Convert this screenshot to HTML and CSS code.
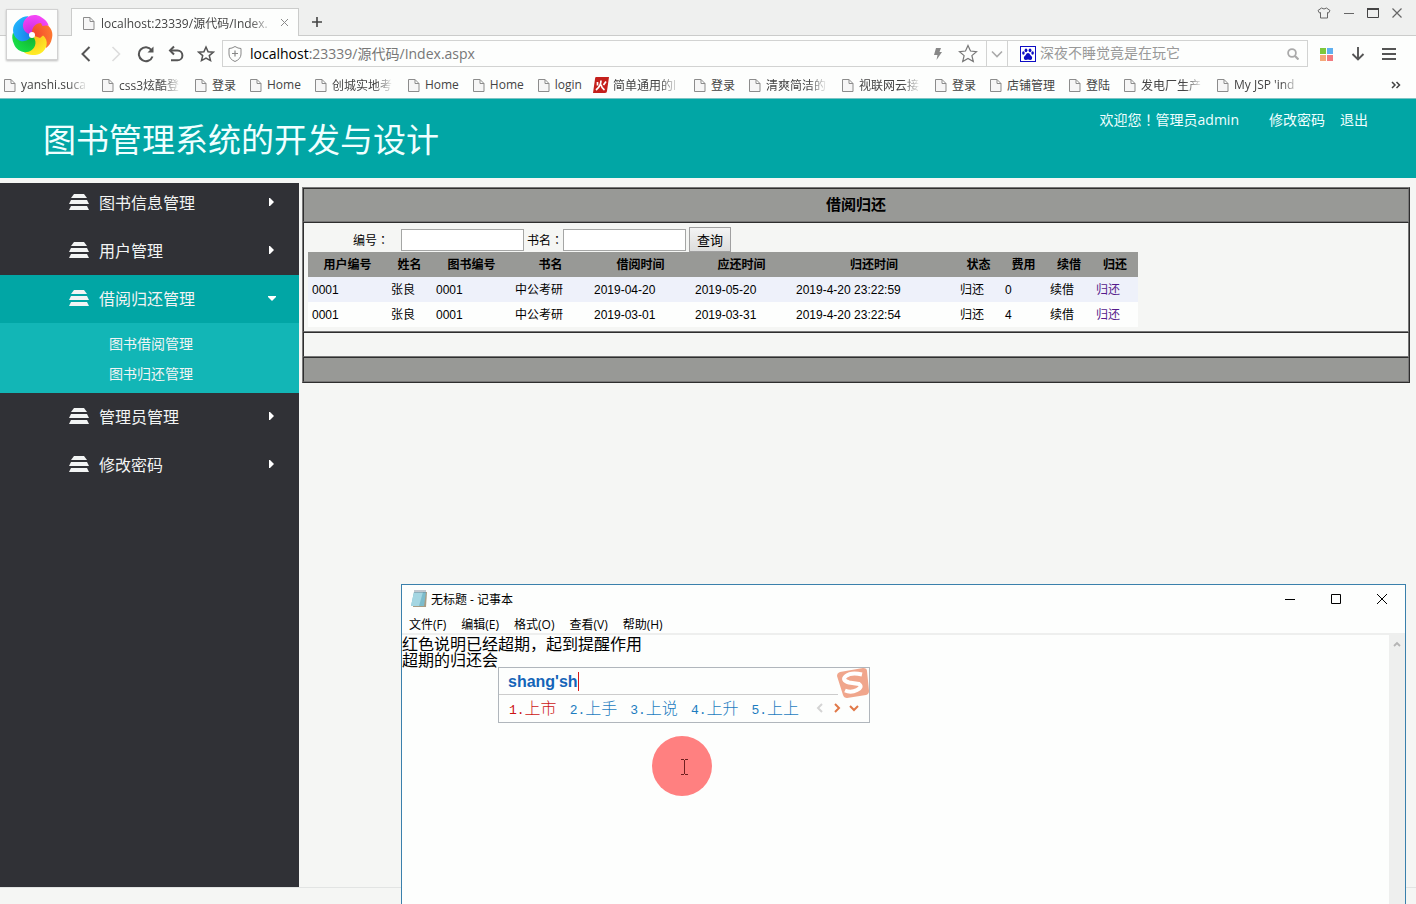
FILE: index.html
```html
<!DOCTYPE html>
<html lang="zh-CN">
<head>
<meta charset="utf-8">
<title>图书管理系统的开发与设计</title>
<link rel="stylesheet" href="styles.css">
</head>
<body>
<svg class="defs" aria-hidden="true">
  <symbol id="page" viewBox="0 0 16 16"><path d="M3.5 2.5h6.5l4 4v8h-10.5z M10 2.5v4h4" fill="#f6f6f6" stroke="#8c8c8c"/></symbol>
  <symbol id="stack" viewBox="0 0 20 18"><path d="M5 1h10l3 4H2zM2 7h16l2 4H0zM2 13h16l2 4H0z" fill="#f2f4f4"/></symbol>
  <symbol id="right" viewBox="0 0 8 10"><path d="M1 1h1l4 4-4 4H1z" fill="#fff"/></symbol>
  <symbol id="down" viewBox="0 0 10 8"><path d="M1 2h8v1L5 7 1 3z" fill="#fff"/></symbol>
</svg>

<div class="browser">
  <div class="tabstrip">
    <div class="logo">
      <svg width="44" height="44" viewBox="-22 -22 44 44">
        <defs>
          <path id="petal" d="M0 0C-1 -8 4 -12 9 -12C17 -12 22 -4 20 3C19 8 17 11 14 13C13 6 8 2 0 0z"/>
          <radialGradient id="g1" gradientUnits="userSpaceOnUse" cx="0" cy="0" r="21"><stop offset="0" stop-color="#f0402c"/><stop offset="1" stop-color="#ff7a30"/></radialGradient>
          <radialGradient id="g2" gradientUnits="userSpaceOnUse" cx="0" cy="0" r="21"><stop offset="0" stop-color="#f6b818"/><stop offset="1" stop-color="#fff028"/></radialGradient>
          <radialGradient id="g3" gradientUnits="userSpaceOnUse" cx="0" cy="0" r="21"><stop offset="0" stop-color="#10b030"/><stop offset="1" stop-color="#18e048"/></radialGradient>
          <radialGradient id="g4" gradientUnits="userSpaceOnUse" cx="0" cy="0" r="21"><stop offset="0" stop-color="#1878e8"/><stop offset="1" stop-color="#20b4fc"/></radialGradient>
          <radialGradient id="g5" gradientUnits="userSpaceOnUse" cx="0" cy="0" r="21"><stop offset="0" stop-color="#c428dc"/><stop offset="1" stop-color="#f848f8"/></radialGradient>
        </defs>
        <circle r="13" fill="#1c9cf6"/>
        <use href="#petal" fill="url(#g1)"/>
        <use href="#petal" fill="url(#g2)" transform="rotate(72)"/>
        <use href="#petal" fill="url(#g3)" transform="rotate(144)"/>
        <use href="#petal" fill="url(#g4)" transform="rotate(216)"/>
        <use href="#petal" fill="url(#g5)" transform="rotate(288)"/>
        <path d="M0 0C-1 -8 4 -12 9 -12L14 -2 8 3z" fill="url(#g1)"/>
        <circle r="3" fill="#fff"/>
      </svg>
    </div>
    <div class="tab">
      <svg width="16" height="16"><use href="#page"/></svg>
      <span class="tab-title">localhost:23339/源代码/Index.</span>
      <button class="plain" aria-label="关闭标签"><svg width="9" height="9" viewBox="0 0 9 9"><path d="M1 1l7 7M8 1l-7 7" stroke="#8a8a8a"/></svg></button>
    </div>
    <button class="plain newtab" aria-label="新标签"><svg width="12" height="12" viewBox="0 0 12 12"><path d="M6 1v10M1 6h10" stroke="#444" stroke-width="1.6"/></svg></button>
    <div class="winbtns">
      <button class="plain" aria-label="皮肤"><svg width="14" height="12" viewBox="0 0 14 12"><path d="M4.5 1Q7 3 9.500 1L13 3.500 11.500 6 10.500 5.500V11H3.500V5.500L2.500 6 1 3.500z" fill="none" stroke="#666"/></svg></button>
      <button class="plain" aria-label="最小化"><svg width="12" height="12" viewBox="0 0 12 12"><path d="M1 6.500h10" stroke="#666"/></svg></button>
      <button class="plain" aria-label="最大化"><svg width="12" height="12" viewBox="0 0 12 12"><path d="M.5 1.500h11v9H.5z" fill="none" stroke="#444"/><path d="M0 2h12" stroke="#444" stroke-width="2"/></svg></button>
      <button class="plain" aria-label="关闭"><svg width="12" height="12" viewBox="0 0 12 12"><path d="M1.500 1.500l9 9M10.500 1.500l-9 9" stroke="#666" stroke-width="1.200"/></svg></button>
    </div>
  </div>

  <div class="toolbar">
    <div class="nav">
      <button class="plain" aria-label="后退"><svg width="18" height="18" viewBox="0 0 18 18"><path d="M12.500 2L5.500 9l7 7" fill="none" stroke="#555" stroke-width="2"/></svg></button>
      <button class="plain" aria-label="前进"><svg width="18" height="18" viewBox="0 0 18 18"><path d="M5.500 2l7 7-7 7" fill="none" stroke="#ddd" stroke-width="1.600"/></svg></button>
      <button class="plain" aria-label="刷新"><svg width="18" height="18" viewBox="0 0 18 18"><path d="M14.500 5A7 7 0 1 0 15.500 11.500" fill="none" stroke="#555" stroke-width="2"/><path d="M16.500 1.500v6h-6z" fill="#555"/></svg></button>
      <button class="plain" aria-label="恢复"><svg width="18" height="18" viewBox="0 0 18 18"><path d="M3 5.500h7.500a4.900 4.900 0 0 1 0 9.800H4" fill="none" stroke="#555" stroke-width="2"/><path d="M7 1.500L3 5.500l4 4" fill="none" stroke="#555" stroke-width="2"/></svg></button>
      <button class="plain" aria-label="收藏"><svg width="18" height="18" viewBox="0 0 18 18"><path d="M9 2l2.100 4.700 5.100.5-3.900 3.400 1.200 5L9 13l-4.500 2.600 1.200-5L1.800 7.200l5.100-.5z" fill="none" stroke="#555" stroke-width="1.500"/></svg></button>
    </div>
    <div class="address">
      <svg width="16" height="18" viewBox="0 0 16 18"><path d="M8 1.500Q11 3.500 14 3.500V9Q14 14 8 16.500 2 14 2 9V3.500Q5 3.500 8 1.500z" fill="none" stroke="#888"/><path d="M8 5.500v6M5 8.500h6" stroke="#888" stroke-width="1.200"/></svg>
      <div class="url" role="textbox" aria-label="地址"><b>localhost</b>:23339/源代码/Index.aspx</div>
      <svg width="10" height="14" viewBox="0 0 10 14"><path d="M3 1h5L6.500 5H9L3.500 13 4.500 8H1z" fill="#888"/></svg>
      <svg width="20" height="20" viewBox="0 0 20 20"><path d="M10 1.500l2.500 5.500 6 .6-4.600 4 1.400 6L10 14.500l-5.300 3.100 1.400-6-4.600-4 6-.6z" fill="none" stroke="#777" stroke-width="1.200"/></svg>
      <button class="plain drop" aria-label="历史"><svg width="12" height="8" viewBox="0 0 12 8"><path d="M1 1.500l5 5 5-5" fill="none" stroke="#aaa" stroke-width="1.600"/></svg></button>
      <div class="search">
        <svg width="16" height="16" viewBox="0 0 16 16"><rect x=".5" y=".5" width="15" height="15" fill="#fff" stroke="#0d0dc4"/><g fill="#0d0dc4"><ellipse cx="6" cy="4.300" rx="1.400" ry="1.900"/><ellipse cx="10" cy="4.300" rx="1.400" ry="1.900"/><ellipse cx="3.400" cy="7" rx="1.300" ry="1.700"/><ellipse cx="12.600" cy="7" rx="1.300" ry="1.700"/><path d="M8 7q1.500 0 2.500 2.200Q13 11 12 13q-1 1.500-4 .5-3 1-4-.5-1-2 1.500-3.800Q6.500 7 8 7z"/></g></svg>
        <input type="text" aria-label="搜索" placeholder="深夜不睡觉竟是在玩它">
        <svg width="12" height="12" viewBox="0 0 12 12"><circle cx="5" cy="5" r="3.900" fill="none" stroke="#aaa" stroke-width="1.800"/><path d="M8 8l3.500 3.500" stroke="#aaa" stroke-width="2.200"/></svg>
      </div>
    </div>
    <div class="tools">
      <button class="plain" aria-label="扩展"><svg width="14" height="14" viewBox="0 0 14 14"><path d="M0 1h6v6H0z" fill="#7ec83c"/><path d="M7 1h6v6H7z" fill="#5fb0f0"/><path d="M0 8h6v6H0z" fill="#f6a878"/><path d="M7 8h6v6H7z" fill="#f27a80"/></svg></button>
      <button class="plain" aria-label="下载"><svg width="14" height="14" viewBox="0 0 14 14"><path d="M7 0v12M1.500 7L7 12.500 12.500 7" fill="none" stroke="#555" stroke-width="1.900"/></svg></button>
      <button class="plain" aria-label="菜单"><svg width="14" height="14" viewBox="0 0 14 14"><path d="M0 2h14M0 7h14M0 12h14" stroke="#555" stroke-width="2"/></svg></button>
    </div>
  </div>

  <nav class="bookmarks">
    <a href="#"><svg><use href="#page"/></svg><span class="fade wide">yanshi.suca</span></a>
    <a href="#"><svg><use href="#page"/></svg><span class="fade">css3炫酷登</span></a>
    <a href="#"><svg><use href="#page"/></svg><span>登录</span></a>
    <a href="#"><svg><use href="#page"/></svg><span>Home</span></a>
    <a href="#"><svg><use href="#page"/></svg><span class="fade">创城实地考</span></a>
    <a href="#"><svg><use href="#page"/></svg><span>Home</span></a>
    <a href="#"><svg><use href="#page"/></svg><span>Home</span></a>
    <a href="#"><svg><use href="#page"/></svg><span>login</span></a>
    <a href="#"><svg viewBox="0 0 16 16"><path d="M3 0h13l-2 14q0 2-2 2H0L2 2q0-2 1-2z" fill="#c4201c"/><path d="M8 3.500Q8 9 3 13M8 7.500Q8.500 11 11.500 13M4.500 5v3.500M13 4.500L10.500 8" fill="none" stroke="#fff" stroke-width="1.700"/></svg><span class="fade wide">简单通用的l</span></a>
    <a href="#"><svg><use href="#page"/></svg><span>登录</span></a>
    <a href="#"><svg><use href="#page"/></svg><span class="fade">清爽简洁的</span></a>
    <a href="#"><svg><use href="#page"/></svg><span class="fade">视联网云接</span></a>
    <a href="#"><svg><use href="#page"/></svg><span>登录</span></a>
    <a href="#"><svg><use href="#page"/></svg><span>店铺管理</span></a>
    <a href="#"><svg><use href="#page"/></svg><span>登陆</span></a>
    <a href="#"><svg><use href="#page"/></svg><span class="fade">发电厂生产</span></a>
    <a href="#"><svg><use href="#page"/></svg><span class="fade wide">My JSP 'ind</span></a>
    <button class="plain more" aria-label="更多书签"><svg viewBox="0 0 10 10" class="chev"><path d="M1 2l3 3-3 3M5.500 2l3 3-3 3" fill="none" stroke="#444" stroke-width="1.500"/></svg></button>
  </nav>
</div>

<header class="banner">
  <h1>图书管理系统的开发与设计</h1>
  <div class="user">
    <span class="hello">欢迎您<span lang="zh-TW" class="mid">！</span>管理员admin</span>
    <a href="#">修改密码</a>
    <a href="#">退出</a>
  </div>
</header>

<div class="body">
  <aside class="side">
    <ul class="menu">
      <li><a class="item" href="#"><svg class="ico"><use href="#stack"/></svg>图书信息管理<svg class="arr"><use href="#right"/></svg></a></li>
      <li><a class="item" href="#"><svg class="ico"><use href="#stack"/></svg>用户管理<svg class="arr"><use href="#right"/></svg></a></li>
      <li>
        <a class="item open" href="#"><svg class="ico"><use href="#stack"/></svg>借阅归还管理<svg class="arr"><use href="#down"/></svg></a>
        <ul class="sub">
          <li><a href="#">图书借阅管理</a></li>
          <li><a href="#">图书归还管理</a></li>
        </ul>
      </li>
      <li><a class="item" href="#"><svg class="ico"><use href="#stack"/></svg>管理员管理<svg class="arr"><use href="#right"/></svg></a></li>
      <li><a class="item" href="#"><svg class="ico"><use href="#stack"/></svg>修改密码<svg class="arr"><use href="#right"/></svg></a></li>
    </ul>
  </aside>

  <main class="content">
    <section class="frame">
      <h2 class="cell bar title">借阅归还</h2>
      <div class="cell list">
        <form class="query">
          <label class="no" for="no">编号<span lang="zh-TW" class="mid">：</span></label>
          <input id="no" type="text">
          <label for="name">书名<span lang="zh-TW" class="mid">：</span></label>
          <input id="name" type="text">
          <button type="button">查询</button>
        </form>
        <table class="grid">
          <colgroup><col class="w79"><col class="w45"><col class="w79"><col class="w79"><col class="w101"><col class="w101"><col class="w164"><col class="w45"><col class="w45"><col class="w46"><col class="w46"></colgroup>
          <thead><tr><th>用户编号</th><th>姓名</th><th>图书编号</th><th>书名</th><th>借阅时间</th><th>应还时间</th><th>归还时间</th><th>状态</th><th>费用</th><th>续借</th><th>归还</th></tr></thead>
          <tbody>
            <tr><td>0001</td><td>张良</td><td>0001</td><td>中公考研</td><td>2019-04-20</td><td>2019-05-20</td><td>2019-4-20 23:22:59</td><td>归还</td><td>0</td><td>续借</td><td><a href="#">归还</a></td></tr>
            <tr><td>0001</td><td>张良</td><td>0001</td><td>中公考研</td><td>2019-03-01</td><td>2019-03-31</td><td>2019-4-20 23:22:54</td><td>归还</td><td>4</td><td>续借</td><td><a href="#">归还</a></td></tr>
          </tbody>
        </table>
      </div>
      <div class="cell thin"></div>
      <div class="cell bar thin"></div>
    </section>
  </main>
</div>
<footer class="foot"></footer>

<section class="notepad">
  <div class="np-title">
    <svg width="16" height="18" viewBox="0 0 16 18"><path d="M3 2h13l-1 15H2z" fill="#a89c84"/><path d="M3 2h12l-2 14H0z" fill="#7cbccc"/><path d="M3 2h9L8 16H0z" fill="#a4d6e2"/><path d="M4 0v3M6 0v3M8 0v3M10 0v3M12 0v3M14 0v3" stroke="#678" stroke-width=".8"/></svg>
    <span class="np-name">无标题 - 记事本</span>
    <button class="plain" aria-label="最小化"><svg width="12" height="12" viewBox="0 0 12 12"><path d="M1 6.500h10" stroke="#000"/></svg></button>
    <button class="plain" aria-label="最大化"><svg width="12" height="12" viewBox="0 0 12 12"><path d="M1.500 1.500h9v9h-9z" fill="none" stroke="#000"/></svg></button>
    <button class="plain" aria-label="关闭"><svg width="12" height="12" viewBox="0 0 12 12"><path d="M1 1l10 10M11 1L1 11" stroke="#000"/></svg></button>
  </div>
  <div class="np-menu">
    <button class="plain">文件(F)</button><button class="plain">编辑(E)</button><button class="plain">格式(O)</button><button class="plain">查看(V)</button><button class="plain">帮助(H)</button>
  </div>
  <div class="np-body">
    <textarea aria-label="文本" spellcheck="false">红色说明已经超期，起到提醒作用
超期的归还会</textarea>
    <div class="np-scroll"><svg width="8" height="6" viewBox="0 0 8 6"><path d="M1 5l3-3 3 3" fill="none" stroke="#b4b4b4" stroke-width="1.800"/></svg></div>
  </div>

  <div class="ime">
    <div class="ime-top"><span class="pinyin">shang'sh</span></div>
    <svg class="sogou" width="32" height="30" viewBox="0 0 32 30"><path d="M3 4L26 0q4 0 4 3l2 20q0 3-3 4L10 30q-3 0-4-3L0 8q0-3 3-4z" fill="#f0a68c"/><path d="M25 6.500Q14 4 9 8t3 6.500q5 .8 10 1.500 4 3-2 6t-12 .5" fill="none" stroke="#fff" stroke-width="4"/></svg>
    <div class="ime-list">
      <button class="plain first"><i>1.</i>上市</button>
      <button class="plain"><i>2.</i>上手</button>
      <button class="plain"><i>3.</i>上说</button>
      <button class="plain"><i>4.</i>上升</button>
      <button class="plain"><i>5.</i>上上</button>
      <span class="pager">
        <svg width="10" height="10" viewBox="0 0 10 10"><path d="M7 1L3 5l4 4" fill="none" stroke="#d4d4d4" stroke-width="2"/></svg>
        <svg width="10" height="10" viewBox="0 0 10 10"><path d="M3 1l4 4-4 4" fill="none" stroke="#e07848" stroke-width="2"/></svg>
        <svg width="10" height="10" viewBox="0 0 10 10"><path d="M1 3l4 4 4-4" fill="none" stroke="#e07848" stroke-width="2"/></svg>
      </span>
    </div>
  </div>
  <svg class="pointer" width="60" height="60" viewBox="0 0 60 60"><circle cx="30" cy="30" r="30" fill="#ff8080"/><path d="M29 23.500h3M33 23.500h3M29 38.500h3M33 38.500h3M32.500 24v14" stroke="#702020"/></svg>
</section>
</body>
</html>
```
FILE: styles.css
```css
* { box-sizing: border-box; }
body {
  margin: 0;
  min-height: 100vh;
  display: flex;
  flex-direction: column;
  overflow: hidden;
  background: #f5f6f4;
  font-family: "Open Sans", "Noto Sans CJK SC", sans-serif;
  font-size: 12px;
  color: #000;
}
a { color: inherit; text-decoration: none; }
ul { list-style: none; margin: 0; padding: 0; }
svg { flex: none; display: block; }
.defs { position: absolute; width: 0; height: 0; }
.plain {
  border: 0;
  padding: 0;
  background: none;
  font: inherit;
  color: inherit;
}
.mid { font-family: "Noto Sans CJK TC", sans-serif; line-height: 1; }

/* browser window */
.browser { background: #fdfefd; border-bottom: 1px solid #7cc4c4; }
.tabstrip {
  position: relative;
  display: flex;
  align-items: flex-end;
  height: 36px;
  padding-left: 71px;
  background: #eff0ef;
  border-bottom: 1px solid #cbcccb;
}
.logo {
  position: absolute;
  left: 6px;
  top: 9px;
  z-index: 1;
  width: 52px;
  height: 51px;
  padding: 3px;
  background: #fdfefd;
  border: 1px solid #d2d2d2;
  box-shadow: 0 1px 2px #bbb;
}
.tab {
  display: flex;
  align-items: center;
  gap: 5px;
  width: 228px;
  height: 28px;
  margin-bottom: -1px;
  padding: 0 9px 0 8px;
  background: #fdfefd;
  border: 1px solid #cbcccb;
  border-bottom: 0;
  color: #444;
}
.tab-title {
  flex: 1;
  white-space: nowrap;
  mask-image: linear-gradient(to right, #000 85%, transparent);
}
.newtab { margin: 0 0 7px 12px; }
.winbtns {
  display: flex;
  gap: 12px;
  margin-left: auto;
  padding: 0 13px 0 0;
  align-self: flex-start;
  margin-top: 7px;
}
.toolbar {
  display: flex;
  align-items: center;
  height: 35px;
  padding: 0 20px 0 77px;
}
.nav { display: flex; gap: 12px; width: 145px; }
.address {
  flex: 1;
  display: flex;
  align-items: center;
  height: 27px;
  padding-left: 4px;
  border: 1px solid #d2d3d2;
  font-size: 14px;
  color: #777;
}
.url { flex: 1; padding: 0 0 2px 7px; white-space: nowrap; }
.url b { font-weight: 400; color: #000; }
.address > svg + svg { margin-left: 15px; }
.drop {
  display: flex;
  align-items: center;
  justify-content: center;
  width: 22px;
  height: 25px;
  margin-left: 8px;
  border: solid #d2d3d2;
  border-width: 0 1px;
}
.search {
  display: flex;
  align-items: center;
  gap: 4px;
  width: 299px;
  padding: 0 8px 0 12px;
}
.search input {
  flex: 1;
  min-width: 0;
  border: 0;
  padding: 0 0 2px;
  outline: 0;
  background: none;
  font: inherit;
}
.search input::placeholder { color: #999; }
.tools { display: flex; gap: 17px; padding-left: 12px; }
.bookmarks {
  display: flex;
  align-items: center;
  gap: 11px;
  height: 27px;
  padding: 0 15px 0 1px;
  color: #444;
}
.bookmarks a { display: flex; align-items: center; gap: 4px; }
.bookmarks a svg { width: 16px; height: 16px; }
.bookmarks span { white-space: nowrap; }
.fade {
  width: 62px;
  mask-image: linear-gradient(to right, #000 70%, transparent);
}
.fade.wide { width: 67px; }
.more { margin-left: auto; }
.chev { width: 10px; height: 10px; }

/* page banner */
.banner {
  display: flex;
  justify-content: space-between;
  height: 79px;
  padding: 0 48px 0 43px;
  background: #01a6a5;
  color: #f0ffff;
}
.banner h1 { margin: 0; font-size: 33px; font-weight: 400; line-height: 82px; }
.user { display: flex; gap: 15px; padding-top: 11px; font-size: 14px; line-height: 20px; }
.hello { margin-right: 15px; }

.body { flex: 1; display: flex; margin-top: 5px; }

/* side menu */
.side { width: 299px; background: #303136; color: #f2f4f4; }
.menu { margin-top: -4px; }
.item {
  display: flex;
  align-items: center;
  height: 48px;
  padding: 0 22px 2px 69px;
  font-size: 16px;
}
.item.open { background: #01a6a5; }
.ico { width: 20px; height: 18px; margin-right: 10px; }
.arr { width: 10px; height: 10px; margin-left: auto; }
.sub {
  padding: 6px 0 4px 109px;
  background: #12b6b6;
  font-size: 14px;
  line-height: 30px;
}

/* borrow / return panel */
.content {
  flex: 1;
  min-width: 0;
  padding: 4px 6px 0 3px;
  font-family: "Liberation Sans", "Noto Sans CJK SC", sans-serif;
}
.frame { border: 1px solid #777; border-color: #777 #2e2e2e #2e2e2e #777; }
.cell { border: 1px solid #777; border-color: #2e2e2e #777 #777 #2e2e2e; }
.bar { background: #989996; }
.title { margin: 0; font-size: 15px; line-height: 32px; text-align: center; }
.list { padding: 4px; }
.thin { height: 25px; }
.query { display: flex; align-items: center; height: 25px; padding-left: 45px; }
.query .no { width: 48px; }
.query label { width: 36px; white-space: nowrap; }
.query input {
  width: 123px;
  height: 22px;
  border: 1px solid #a5a6a5;
  background: #fff;
}
.query input + label { margin-left: 3px; }
.query button {
  width: 42px;
  height: 25px;
  margin-left: 3px;
  padding: 0;
  border: 1px solid #a0a0a0;
  background: linear-gradient(#f4f4f4, #dcdddc);
  font: inherit;
  font-size: 13px;
}
.grid { width: 830px; table-layout: fixed; border-collapse: collapse; }
.grid tr { height: 25px; background: #fdfefd; }
.grid th, .grid td { padding: 2px 4px 0; text-align: left; white-space: nowrap; line-height: 23px; }
.grid thead tr { background: #989996; }
.grid th { padding: 2px 0 0; text-align: center; }
.grid tbody tr:first-child { background: #eef1fa; }
.grid a { color: #551a8b; }
.w45 { width: 45px; }
.w46 { width: 46px; }
.w79 { width: 79px; }
.w101 { width: 101px; }
.w164 { width: 164px; }

.foot { height: 17px; border-top: 1px solid #e2e4e3; }

/* notepad window floating over the page */
.notepad {
  position: fixed;
  left: 401px;
  right: 10px;
  top: 584px;
  bottom: 0;
  display: flex;
  flex-direction: column;
  border: 1px solid #3a80ac;
  border-bottom: 0;
  background: #fdfefd;
}
.np-title {
  display: flex;
  align-items: center;
  height: 28px;
  padding: 0 17px 0 9px;
}
.np-name { flex: 1; padding-left: 4px; }
.np-title button + button { margin-left: 34px; }
.np-menu {
  display: flex;
  gap: 15px;
  height: 22px;
  padding: 2px 0 0 7px;
  border-bottom: 2px solid #eeefee;
}
.np-body { flex: 1; display: flex; }
.np-body textarea {
  flex: 1;
  border: 0;
  padding: 0;
  outline: 0;
  resize: none;
  background: none;
  font: 16px/16px "Noto Sans CJK SC", sans-serif;
  color: #000;
}
.np-scroll { width: 16px; padding: 6px 4px; background: #eeefee; }

.ime {
  position: absolute;
  left: 96px;
  top: 82px;
  width: 372px;
  background: #fdfefd;
  border: 1px solid #b0b6bc;
}
.ime-top {
  height: 27px;
  margin-right: 31px;
  padding: 4px 0 0 9px;
  border-bottom: 1px solid #ccc;
}
.pinyin {
  display: inline-block;
  border-right: 1px solid #d81818;
  font: bold 16px/19px "Liberation Sans", sans-serif;
  color: #1464b8;
}
.sogou { position: absolute; right: 0; top: 0; }
.ime-list {
  display: flex;
  align-items: center;
  gap: 13px;
  height: 27px;
  padding: 0 10px 2px;
  font: 16px/20px "Noto Sans CJK SC", sans-serif;
  color: #1c7cc0;
}
.ime-list i { font: 13px "Liberation Mono", monospace; }
.ime-list .plain { display: flex; align-items: baseline; font-weight: 300; white-space: nowrap; }
.ime-list .first { color: #cc1414; }
.pager { display: flex; gap: 7px; padding-left: 3px; }
.pointer { position: absolute; left: 250px; top: 151px; }
```
